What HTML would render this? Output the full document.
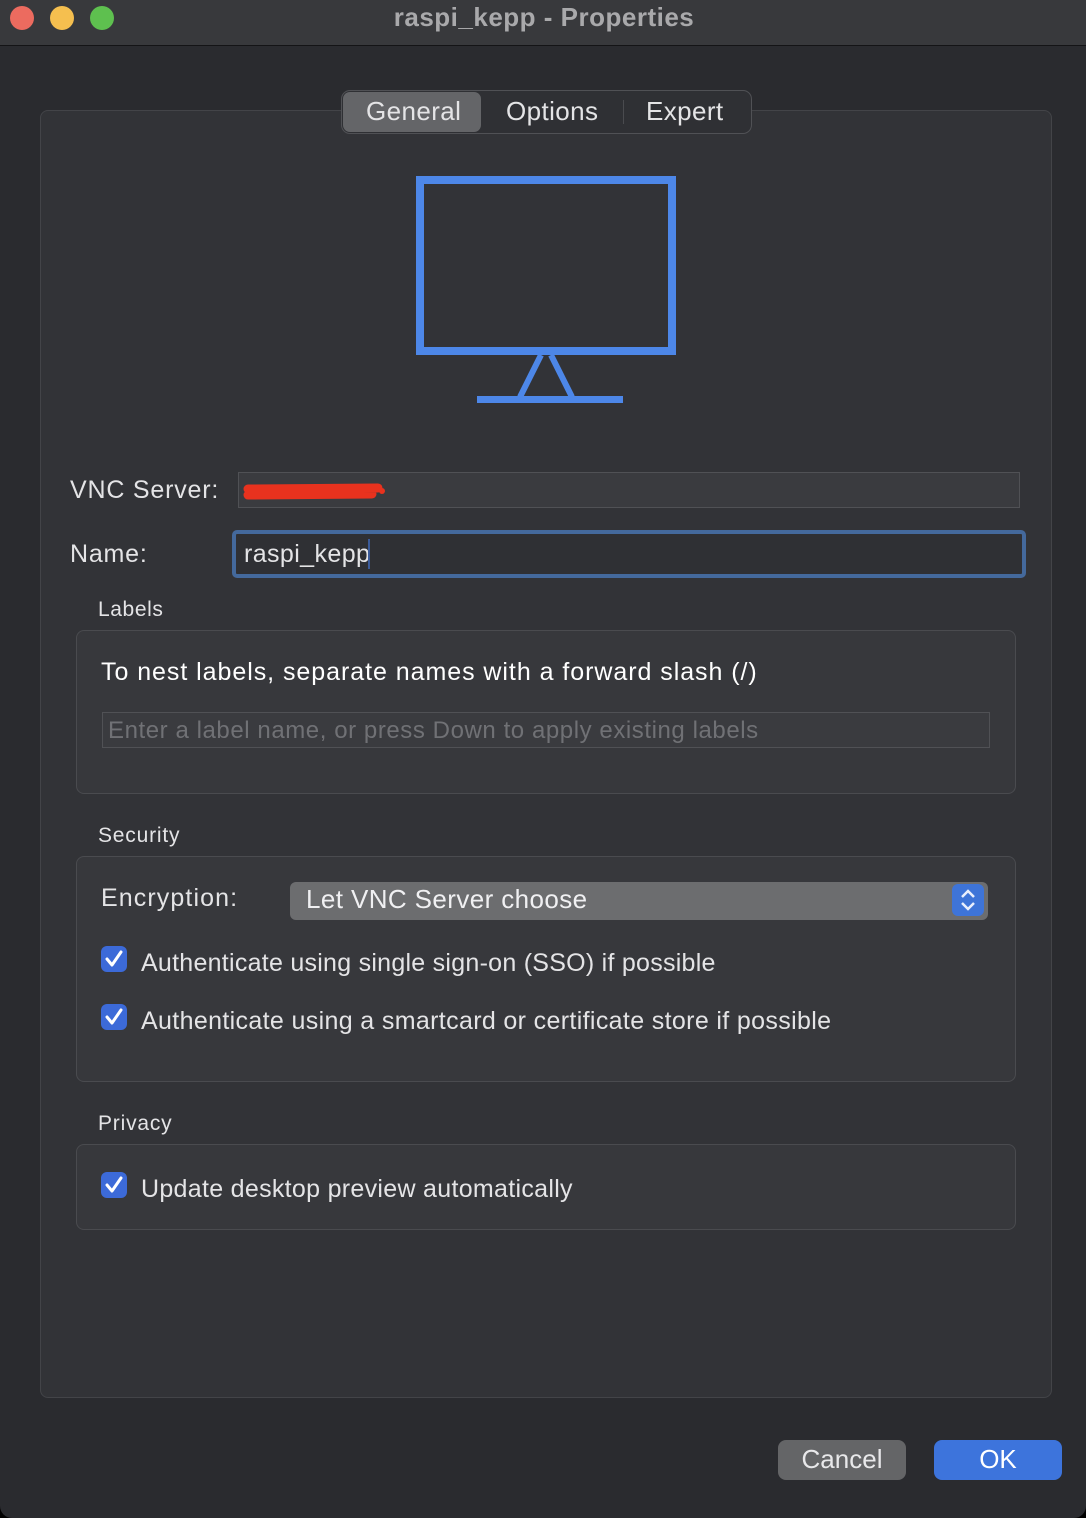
<!DOCTYPE html>
<html><head><meta charset="utf-8"><style>
*{margin:0;padding:0;box-sizing:border-box}
body{width:1086px;height:1518px;background:#000;font-family:"Liberation Sans",sans-serif;color:#e4e4e6;position:relative;overflow:hidden}
.win{position:absolute;left:0;top:0;width:1086px;height:1518px;background:#2a2b2f;border-radius:0 0 12px 12px;overflow:hidden}
.title{position:absolute;left:0;top:0;width:1086px;height:46px;background:#38393c;border-bottom:1px solid #141416}
.dot{position:absolute;top:6px;width:24px;height:24px;border-radius:50%}
.ttl{position:absolute;top:2px;left:0;width:1086px;text-align:center;font-size:26px;font-weight:bold;color:#a9a9ab;padding-left:2px;letter-spacing:0.5px}
.a{position:absolute}
.panel{left:40px;top:110px;width:1012px;height:1288px;background:#323337;border:1px solid #434448;border-radius:8px}
.seg{left:341px;top:90px;width:411px;height:44px;background:#2f3034;border:1px solid #505155;border-radius:9px}
.segsel{left:343px;top:92px;width:138px;height:40px;background:#646568;border-radius:7px}
.lbl{font-size:25px;color:#e4e4e6;letter-spacing:0.4px;white-space:nowrap}
.box{background:#37383c;border:1px solid #4a4b4f;border-radius:8px}
.field{background:#3a3b3f;border:1px solid #505155}
.cb{position:absolute;width:26px;height:26px;background:#3c6ad8;border-radius:6px}
.btn{position:absolute;height:40px;border-radius:8px;font-size:26px;text-align:center;line-height:39px}
</style></head><body>
<div class="win">
<div class="title">
<div class="dot" style="left:10px;background:#ec6b5f"></div>
<div class="dot" style="left:50px;background:#f5bf4f"></div>
<div class="dot" style="left:90px;background:#5ec04f"></div>
<div class="ttl">raspi_kepp - Properties</div>
</div>
<div class="a panel"></div>
<div class="a seg"></div>
<div class="a segsel"></div>
<div class="a" style="left:623px;top:100px;width:1px;height:24px;background:#4a4b4f"></div>
<div class="a lbl" style="left:366px;top:96px;font-size:26px">General</div>
<div class="a lbl" style="left:506px;top:96px;font-size:26px">Options</div>
<div class="a lbl" style="left:646px;top:96px;font-size:26px">Expert</div>
<svg class="a" style="left:0;top:0" width="1086" height="420">
<rect x="420" y="180" width="252" height="171" fill="none" stroke="#4d87e8" stroke-width="8"/>
<path d="M541 355 L520 397 M551 355 L572 397" stroke="#4d87e8" stroke-width="6" fill="none"/>
<rect x="477" y="396" width="146" height="7" fill="#4d87e8"/>
</svg>
<div class="a lbl" style="left:70px;top:476px;letter-spacing:0.8px">VNC Server:</div>
<div class="a field" style="left:238px;top:472px;width:782px;height:36px"></div>
<svg class="a" style="left:240px;top:478px" width="150" height="26"><path d="M8 11 L138 10 M8 17 L132 16" stroke="#e8321e" stroke-width="9" stroke-linecap="round"/><circle cx="142" cy="13" r="3" fill="#e8321e"/></svg>
<div class="a lbl" style="left:70px;top:540px;letter-spacing:0.8px">Name:</div>
<div class="a" style="left:232px;top:530px;width:794px;height:48px;border:4px solid #44699c;border-radius:5px;background:#2f3034"></div>
<div class="a lbl" style="left:244px;top:540px;font-size:25px">raspi_kepp</div>
<div class="a" style="left:368px;top:539px;width:2px;height:30px;background:#3b5b9a"></div>
<div class="a lbl" style="left:98px;top:598px;font-size:21px;letter-spacing:0.6px">Labels</div>
<div class="a box" style="left:76px;top:630px;width:940px;height:164px"></div>
<div class="a lbl" style="left:101px;top:658px;font-size:25px;color:#fff;letter-spacing:0.95px">To nest labels, separate names with a forward slash (/)</div>
<div class="a field" style="left:102px;top:712px;width:888px;height:36px"></div>
<div class="a lbl" style="left:108px;top:717px;font-size:24px;color:#707175;letter-spacing:0.57px">Enter a label name, or press Down to apply existing labels</div>
<div class="a lbl" style="left:98px;top:824px;font-size:21px;letter-spacing:0.8px">Security</div>
<div class="a box" style="left:76px;top:856px;width:940px;height:226px"></div>
<div class="a lbl" style="left:101px;top:884px;letter-spacing:1.1px">Encryption:</div>
<div class="a" style="left:290px;top:882px;width:698px;height:38px;background:#6c6d6f;border-radius:6px"></div>
<div class="a lbl" style="left:306px;top:884px;font-size:26px;color:#f0f0f2">Let VNC Server choose</div>
<div class="a" style="left:952px;top:884px;width:32px;height:32px;background:#3e74d8;border-radius:6px"></div>
<svg class="a" style="left:952px;top:884px" width="32" height="32"><path d="M10 13 L16 7 L22 13 M10 19 L16 25 L22 19" stroke="#e8eefc" stroke-width="2.5" fill="none"/></svg>
<div class="cb" style="left:101px;top:946px"></div>
<svg class="a" style="left:101px;top:946px" width="26" height="26"><path d="M6 13 L11 19 L20 6" stroke="#fff" stroke-width="3" fill="none" stroke-linecap="round" stroke-linejoin="round"/></svg>
<div class="a lbl" style="left:141px;top:949px;letter-spacing:0.26px">Authenticate using single sign-on (SSO) if possible</div>
<div class="cb" style="left:101px;top:1004px"></div>
<svg class="a" style="left:101px;top:1004px" width="26" height="26"><path d="M6 13 L11 19 L20 6" stroke="#fff" stroke-width="3" fill="none" stroke-linecap="round" stroke-linejoin="round"/></svg>
<div class="a lbl" style="left:141px;top:1007px;letter-spacing:0.35px">Authenticate using a smartcard or certificate store if possible</div>
<div class="a lbl" style="left:98px;top:1112px;font-size:21px;letter-spacing:0.8px">Privacy</div>
<div class="a box" style="left:76px;top:1144px;width:940px;height:86px"></div>
<div class="cb" style="left:101px;top:1172px"></div>
<svg class="a" style="left:101px;top:1172px" width="26" height="26"><path d="M6 13 L11 19 L20 6" stroke="#fff" stroke-width="3" fill="none" stroke-linecap="round" stroke-linejoin="round"/></svg>
<div class="a lbl" style="left:141px;top:1175px;letter-spacing:0.3px">Update desktop preview automatically</div>
<div class="btn" style="left:778px;top:1440px;width:128px;background:#646567;color:#e8e8ea">Cancel</div>
<div class="btn" style="left:934px;top:1440px;width:128px;background:#3d74dc;color:#fff">OK</div>
</div>
</body></html>
